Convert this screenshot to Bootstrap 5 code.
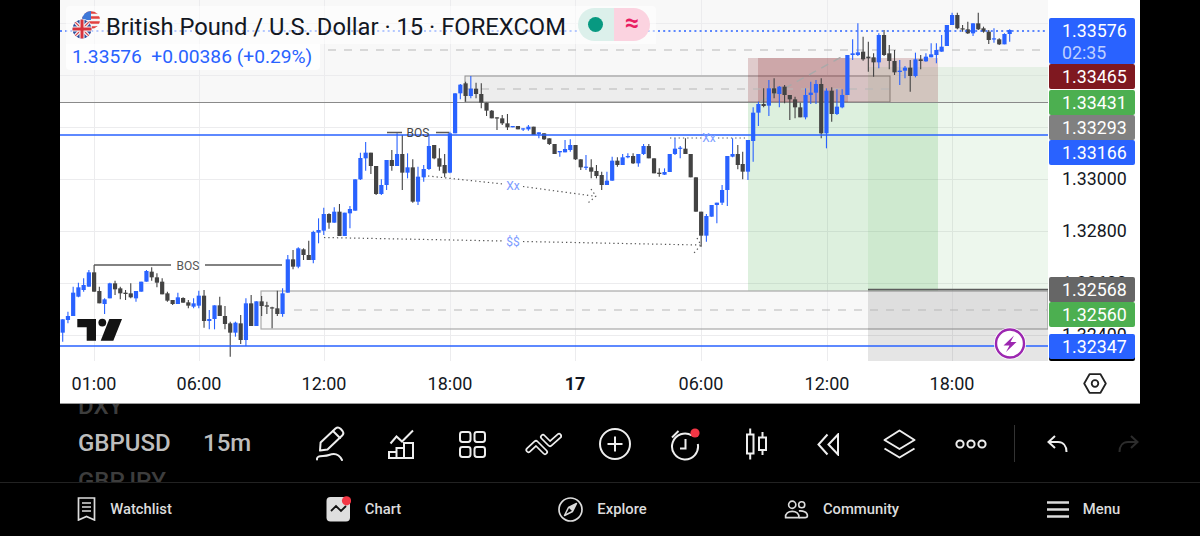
<!DOCTYPE html>
<html lang="en">

<head>
  <meta charset="UTF-8" />
  <title>GBPUSD chart</title>
  <link href="https://cdn.jsdelivr.net/npm/bootstrap@5.3.2/dist/css/bootstrap.min.css" rel="stylesheet">
  <style>
    html,
    body {
      height: 536px;
      overflow: hidden;
      background: #000;
      font-family: Roboto, "Liberation Sans", sans-serif;
    }

    .chart-panel {
      margin: 0 60px;
      height: 404px;
      background: #fff;
      border-bottom: 1px solid #9a9a9a;
    }

    .plot-area {
      width: 988px;
      height: 361px;
    }

    .plot-area svg {
      display: block;
    }

    .plot-text {
      font-family: Roboto, "Liberation Sans", sans-serif;
      font-size: 12px;
    }

    .legend-box {
      left: 6px;
      top: 6px;
    }

    .legend-row {
      width: fit-content;
      padding: 4px 0 0 6px;
      background: rgba(255, 255, 255, .55);
      border-radius: 4px 4px 0 0;
    }

    .legend-title {
      font-size: 23.75px;
      line-height: 32px;
      color: #131722;
      white-space: nowrap;
    }

    .legend-price {
      width: fit-content;
      padding: 0 8px 0 6px;
      font-size: 19.2px;
      line-height: 26px;
      color: #2962ff;
      white-space: nowrap;
      background: rgba(255, 255, 255, .8);
      border-radius: 0 0 4px 4px;
    }

    .status-pill {
      width: 72px;
      height: 33px;
      margin: -5px 6px 0 12px;
      border-radius: 17px;
      overflow: hidden;
    }

    .pill-left {
      background: #dcf0eb;
    }

    .pill-right {
      background: #fbd3e0;
      color: #e91e63;
      font-size: 25px;
      font-weight: 700;
      line-height: 30px;
    }

    .pill-dot {
      width: 15px;
      height: 15px;
      border-radius: 50%;
      background: #089981;
    }

    .axis-col {
      width: 92px;
      height: 361px;
    }

    .axis-tag,
    .axis-plain {
      left: 1px;
      width: 86px;
      height: 25px;
      padding-left: 13px;
      font-size: 17.8px;
      line-height: 26px;
      white-space: nowrap;
    }

    .axis-tag {
      border-radius: 2px;
      color: #fff;
    }

    .axis-plain {
      color: #131722;
    }

    .tag-blue {
      background: #2962ff;
    }

    .tag-red {
      background: #7f1820;
    }

    .tag-green {
      background: #4caf50;
    }

    .tag-gray {
      background: #808080;
    }

    .tag-dark {
      background: #666;
    }

    .tag-black {
      background: #000;
    }

    .tag-timer {
      height: 46px;
    }

    .tag-timer span {
      display: block;
      line-height: 22px;
      padding-top: 2px;
    }

    .tag-timer span+span {
      color: #bfd0ff;
      padding-top: 0;
    }

    .time-row {
      height: 42px;
    }

    .time-label {
      top: 10px;
      transform: translateX(-50%);
      font-size: 18px;
      line-height: 25px;
      color: #131722;
    }

    .gear-cell {
      left: 1023px;
      top: 12px;
    }

    .tool-row {
      height: 79px;
      padding-left: 78px;
      border-bottom: 1px solid #222;
    }

    .picker-col {
      height: 78px;
      padding-top: 2px;
      overflow: hidden;
      font-size: 24px;
      font-weight: 500;
      line-height: 37.5px;
    }

    .picker-sym {
      width: 125px;
    }

    .picker-int {
      width: 91.5px;
    }

    .picker-off {
      color: #3d3d3d;
      white-space: nowrap;
    }

    .picker-on {
      color: #bdbdbd;
    }

    .tool-cell {
      width: 71.2px;
      height: 40px;
      margin-top: 2px;
    }

    .tool-divider {
      width: 1px;
      height: 37px;
      margin: 0 7px 0 7.5px;
      background: #333;
    }

    .bottom-bar {
      height: 52px;
      padding-left: 5px;
    }

    .menu-icon {
      margin-left: 6px;
    }

    .bottom-label {
      margin-left: 14px;
      padding-top: 1px;
      font-size: 14.8px;
      font-weight: 500;
      color: #dcdcdc;
    }
  </style>
</head>

<body>
  <div class="chart-panel">
    <div class="d-flex">
      <div class="plot-area position-relative">
        <svg id="plot" width="988" height="361" viewBox="60 0 988 361" xmlns="http://www.w3.org/2000/svg">
          <!-- bandas y zonas -->
          <rect x="60" y="0" width="988" height="102" fill="#f8f8f8" />
          <rect x="261" y="291" width="787" height="38" fill="#f8f8f8" />
          <g stroke="#ececee" stroke-width="1">
            <path d="M94.5 0V361M199.5 0V361M324.5 0V361M450.5 0V361M575.5 0V361M701.5 0V361M827.5 0V361M952.5 0V361" />
            <path d="M60 23.5H1048M60 75.5H1048M60 127.5H1048M60 179.5H1048M60 231.5H1048M60 283.5H1048M60 335.5H1048" />
          </g>
          <rect x="465" y="76" width="425" height="26" fill="#ededed" stroke="#8d8d8d" />
          <rect x="868" y="67" width="180" height="224" fill="#4caf50" fill-opacity=".1" />
          <rect x="748" y="103" width="190" height="188" fill="#4caf50" fill-opacity=".19" />
          <rect x="748" y="58" width="190" height="45" fill="#801820" fill-opacity=".2" />
          <rect x="758" y="58" width="90" height="45" fill="#801820" fill-opacity=".2" />
          <rect x="261" y="291" width="787" height="38" fill="none" stroke="#a9a9a9" stroke-width="1.2" />
          <rect x="868" y="289" width="180" height="72" fill="#000" fill-opacity=".1" />
          <path d="M868 289.5H1048" stroke="#5c5c5c" stroke-width="1.5" />

          <path d="M60 102.5H1048" stroke="#8a8a8a" stroke-width="1.2" />
          <path d="M328 50H1048" stroke="#b8b8b8" stroke-width="1.2" stroke-dasharray="8 8" />
          <path d="M465 89H890" stroke="#b8b8b8" stroke-width="1.2" stroke-dasharray="8 8" />
          <path d="M294 310H1048" stroke="#b8b8b8" stroke-width="1.2" stroke-dasharray="8 8" />
          <path d="M760 102L843 56" stroke="#a9a9a9" stroke-width="1.4" stroke-dasharray="8 6" />

          <g id="candles"></g>

          <!-- lineas de precio -->
          <path d="M60 31H1048" stroke="#2962ff" stroke-width="1.4" stroke-dasharray="2 3.2" />
          <path d="M60 135H1048" stroke="#2962ff" stroke-width="1.5" />
          <path d="M60 346H1048" stroke="#2962ff" stroke-width="1.5" />

          <!-- anotaciones -->
          <g stroke="#5a5a5a" stroke-width="1.3" fill="none">
            <path d="M94 265H171M205 265H282" />
            <path d="M387 132.5H402M436 132.5H449" />
          </g>
          <text class="plot-text" x="188" y="269.5" text-anchor="middle" fill="#555">BOS</text>
          <text class="plot-text" x="418" y="137" text-anchor="middle" fill="#444">BOS</text>
          <g stroke="#555" stroke-width="1.2" stroke-dasharray="1.3 3" fill="none">
            <path d="M428 176L503 184M523 186.5L593 196" />
            <path d="M591 189L596 196L588 203" />
            <path d="M324 237.5L503 241M523 241.5L700 245" />
            <path d="M697 238L701 245L694 253" />
            <path d="M670 138H702M718 138H745" />
          </g>
          <text class="plot-text" x="513" y="190" text-anchor="middle" fill="#7c9cff">Xx</text>
          <text class="plot-text" x="513" y="246" text-anchor="middle" fill="#7c9cff">$$</text>
          <text class="plot-text" x="709" y="142" text-anchor="middle" fill="#7c9cff">Xx</text>

          <!-- logo -->
          <g fill="#131313">
            <path d="M77.3 319H96V340.7H86.7V327.3H77.3Z" />
            <circle cx="102.3" cy="322.6" r="3.9" />
            <path d="M109.3 319H122L113.3 340.7H100.7Z" />
          </g>

          <!-- rayo -->
          <circle cx="1010" cy="343.5" r="16" fill="#fff" />
          <circle cx="1010" cy="343.5" r="14" fill="#fff" stroke="#9c27b0" stroke-width="2.4" />
          <path d="M1014 335.5L1003.5 345.5H1009.5L1006 352L1016.5 342H1010.5Z" fill="#9c27b0" />
        </svg>

        <div class="legend-box position-absolute">
          <div class="legend-row d-flex align-items-center">
            <svg width="34" height="34" viewBox="0 0 34 34" xmlns="http://www.w3.org/2000/svg" class="flex-shrink-0">
              <defs>
                <clipPath id="usClip">
                  <circle cx="19" cy="10" r="9" />
                </clipPath>
                <clipPath id="ukClip">
                  <circle cx="10" cy="19" r="9.5" />
                </clipPath>
              </defs>
              <g clip-path="url(#usClip)">
                <rect x="9" y="0" width="20" height="20" fill="#f4f4f4" />
                <path d="M9 2.5H29M9 7.5H29M9 12.5H29M9 17.5H29" stroke="#e2413f" stroke-width="2.6" />
                <rect x="9" y="0" width="10" height="10" fill="#3f78d8" />
              </g>
              <circle cx="10" cy="19" r="10.3" fill="#fff" fill-opacity=".9" />
              <g clip-path="url(#ukClip)">
                <rect x="0" y="9" width="20" height="20" fill="#2b4a9b" />
                <path d="M0 9L20 29M20 9L0 29" stroke="#f4f4f4" stroke-width="3.6" />
                <path d="M0 9L20 29M20 9L0 29" stroke="#d8424b" stroke-width="1.2" />
                <path d="M10 9V29M0 19H20" stroke="#f4f4f4" stroke-width="5" />
                <path d="M10 9V29M0 19H20" stroke="#d8323c" stroke-width="3" />
              </g>
            </svg>
            <div class="legend-title">British Pound / U.S. Dollar · 15 · FOREXCOM</div>
            <div class="status-pill d-flex">
              <div class="pill-left w-50 d-flex align-items-center justify-content-center">
                <span class="pill-dot"></span>
              </div>
              <div class="pill-right w-50 text-center">≈</div>
            </div>
          </div>
          <div class="legend-price">1.33576&nbsp; +0.00386 (+0.29%)</div>
        </div>
      </div>

      <div class="axis-col position-relative">
        <div class="axis-tag tag-blue tag-timer position-absolute" style="top:18px"><span>1.33576</span><span>02:35</span></div>
        <div class="axis-tag tag-red position-absolute" style="top:64px">1.33465</div>
        <div class="axis-tag tag-green position-absolute" style="top:90px">1.33431</div>
        <div class="axis-tag tag-gray position-absolute" style="top:115px">1.33293</div>
        <div class="axis-tag tag-blue position-absolute" style="top:140px">1.33166</div>
        <div class="axis-plain position-absolute" style="top:166px">1.33000</div>
        <div class="axis-plain position-absolute" style="top:218px">1.32800</div>
        <div class="axis-plain position-absolute" style="top:270px">1.32600</div>
        <div class="axis-plain position-absolute" style="top:322px">1.32400</div>
        <div class="axis-tag tag-dark position-absolute" style="top:277px">1.32568</div>
        <div class="axis-tag tag-green position-absolute" style="top:302px">1.32560</div>
        <div class="axis-tag tag-black position-absolute" style="top:336px"></div>
        <div class="axis-tag tag-blue position-absolute" style="top:334px">1.32347</div>
      </div>
    </div>

    <div class="time-row position-relative">
      <span class="time-label position-absolute" style="left:34px">01:00</span>
      <span class="time-label position-absolute" style="left:139px">06:00</span>
      <span class="time-label position-absolute" style="left:264px">12:00</span>
      <span class="time-label position-absolute" style="left:390px">18:00</span>
      <span class="time-label fw-bold position-absolute" style="left:515px">17</span>
      <span class="time-label position-absolute" style="left:641px">06:00</span>
      <span class="time-label position-absolute" style="left:767px">12:00</span>
      <span class="time-label position-absolute" style="left:892px">18:00</span>
      <svg class="gear-cell position-absolute" width="24" height="21" viewBox="0 0 24 21" fill="none" stroke="#222" stroke-width="1.8" xmlns="http://www.w3.org/2000/svg">
        <path d="M1.2 10.5L6.5 1.2H17.5L22.8 10.5L17.5 19.8H6.5Z" stroke-linejoin="round" />
        <circle cx="12" cy="10.5" r="3.3" />
      </svg>
    </div>
  </div>

  <div class="tool-row d-flex align-items-center">
    <div class="picker-col picker-sym d-flex flex-column justify-content-center">
      <div class="picker-off">DXY</div>
      <div class="picker-on">GBPUSD</div>
      <div class="picker-off">GBPJPY</div>
    </div>
    <div class="picker-col picker-int d-flex align-items-center picker-on">15m</div>

    <div class="tool-cell d-flex align-items-center justify-content-center">
      <svg width="29" height="36" viewBox="0 0 29 36" fill="none" stroke="#eee" stroke-width="2" stroke-linecap="round" stroke-linejoin="round" xmlns="http://www.w3.org/2000/svg">
        <path d="M4 24.5L4.6 16.5L19.5 2.5C21 1.2 23 1.2 24.5 2.7L26.5 5C27.6 6.4 27.5 8.2 26.2 9.5L11.5 23.5Z" />
        <path d="M17 5L24 12" />
        <path d="M1 33.5C0.5 28.5 8 31 13 29C18 27 23 28 26 34" />
      </svg>
    </div>
    <div class="tool-cell d-flex align-items-center justify-content-center">
      <svg width="27" height="31" viewBox="0 0 27 31" fill="none" stroke="#eee" stroke-width="2" xmlns="http://www.w3.org/2000/svg">
        <path d="M2.5 14.5L8.5 7.5L14 12.5L25 1.5" />
        <path d="M1 23H8.5V29H1ZM8.5 19H16V29H8.5ZM16 14H25V29H16Z" />
      </svg>
    </div>
    <div class="tool-cell d-flex align-items-center justify-content-center">
      <svg width="27" height="27" viewBox="0 0 27 27" fill="none" stroke="#eee" stroke-width="2" xmlns="http://www.w3.org/2000/svg">
        <rect x="1" y="1" width="10.5" height="10" rx="2.4" />
        <rect x="15.5" y="1" width="10.5" height="10" rx="2.4" />
        <rect x="1" y="16" width="10.5" height="10" rx="2.4" />
        <rect x="15.5" y="16" width="10.5" height="10" rx="2.4" />
      </svg>
    </div>
    <div class="tool-cell d-flex align-items-center justify-content-center">
      <svg width="37" height="24" viewBox="0 0 37 24" fill="none" xmlns="http://www.w3.org/2000/svg">
        <path d="M3.5 18L11 11L20 20M18 5L25 12L34 4" stroke="#eee" stroke-width="6" stroke-linecap="round" stroke-linejoin="round" />
        <path d="M3.5 18L11 11L20 20M18 5L25 12L34 4" stroke="#000" stroke-width="2.6" stroke-linecap="round" stroke-linejoin="round" />
      </svg>
    </div>
    <div class="tool-cell d-flex align-items-center justify-content-center">
      <svg width="32" height="32" viewBox="0 0 32 32" fill="none" stroke="#eee" stroke-width="2" xmlns="http://www.w3.org/2000/svg">
        <circle cx="16" cy="16" r="15" />
        <path d="M16 8.5V23.5M8.5 16H23.5" />
      </svg>
    </div>
    <div class="tool-cell d-flex align-items-center justify-content-center">
      <svg width="32" height="34" viewBox="0 0 32 34" fill="none" stroke="#eee" stroke-width="2" xmlns="http://www.w3.org/2000/svg">
        <path d="M22 8.5A13 13 0 1 0 27.8 17" />
        <path d="M15.5 12V21.5H10" />
        <path d="M2 10.5L8.5 4" />
        <circle cx="25" cy="6" r="4.6" fill="#f23645" stroke="none" />
      </svg>
    </div>
    <div class="tool-cell d-flex align-items-center justify-content-center">
      <svg width="24" height="32" viewBox="0 0 24 32" fill="none" stroke="#eee" stroke-width="2" xmlns="http://www.w3.org/2000/svg">
        <rect x="2" y="6.5" width="6.5" height="19" />
        <path d="M5.2 0.5V6.5M5.2 25.5V31.5" />
        <rect x="14" y="9.5" width="7" height="12.5" />
        <path d="M17.5 4V9.5M17.5 22V27" />
      </svg>
    </div>
    <div class="tool-cell d-flex align-items-center justify-content-center">
      <svg width="23" height="23" viewBox="0 0 23 23" fill="none" stroke="#eee" stroke-width="2" stroke-linejoin="miter" xmlns="http://www.w3.org/2000/svg">
        <path d="M10.5 1.5L1.5 11.5L10.5 21.5" />
        <path d="M21 1.5L11.5 11.5L21 21.5Z" />
      </svg>
    </div>
    <div class="tool-cell d-flex align-items-center justify-content-center">
      <svg width="33" height="30" viewBox="0 0 33 30" fill="none" stroke="#eee" stroke-width="2" stroke-linejoin="round" xmlns="http://www.w3.org/2000/svg">
        <path d="M16.5 1.5L31.5 11L16.5 20L1.5 11Z" />
        <path d="M1.5 19.5L16.5 28.5L31.5 19.5" />
      </svg>
    </div>
    <div class="tool-cell d-flex align-items-center justify-content-center">
      <svg width="32" height="10" viewBox="0 0 32 10" fill="none" stroke="#eee" stroke-width="2" xmlns="http://www.w3.org/2000/svg">
        <circle cx="5" cy="5" r="3.6" />
        <circle cx="16" cy="5" r="3.6" />
        <circle cx="27" cy="5" r="3.6" />
      </svg>
    </div>
    <div class="tool-divider"></div>
    <div class="tool-cell d-flex align-items-center justify-content-center">
      <svg width="21" height="18" viewBox="0 0 21 18" fill="none" stroke="#eee" stroke-width="2" xmlns="http://www.w3.org/2000/svg">
        <path d="M8 1L1.5 7L8 13" />
        <path d="M1.5 7H11C16 7 19.5 10.5 19.5 17" />
      </svg>
    </div>
    <div class="tool-cell d-flex align-items-center justify-content-center">
      <svg width="21" height="18" viewBox="0 0 21 18" fill="none" stroke="#2c2c2c" stroke-width="2" xmlns="http://www.w3.org/2000/svg">
        <path d="M13 1L19.5 7L13 13" />
        <path d="M19.5 7H10C5 7 1.5 10.5 1.5 17" />
      </svg>
    </div>
  </div>

  <div class="bottom-bar row g-0">
    <div class="col d-flex align-items-center justify-content-center">
      <svg width="19" height="24" viewBox="0 0 19 24" fill="none" stroke="#dcdcdc" stroke-width="1.7" xmlns="http://www.w3.org/2000/svg">
        <path d="M1.5 1H17.5V23L9.5 19.5L1.5 23Z" />
        <path d="M5 6H14M5 10H14M5 14H14" />
      </svg>
      <span class="bottom-label">Watchlist</span>
    </div>
    <div class="col d-flex align-items-center justify-content-center">
      <svg width="25" height="26" viewBox="0 0 25 26" xmlns="http://www.w3.org/2000/svg">
        <rect x="0.5" y="1" width="23.5" height="24.5" rx="4" fill="#dedede" />
        <path d="M5 15L10 10L15 15L20 10" fill="none" stroke="#111" stroke-width="1.8" />
        <circle cx="20.5" cy="4.8" r="4.6" fill="#f23645" />
      </svg>
      <span class="bottom-label">Chart</span>
    </div>
    <div class="col d-flex align-items-center justify-content-center">
      <svg width="25" height="25" viewBox="0 0 25 25" fill="none" xmlns="http://www.w3.org/2000/svg">
        <circle cx="12.5" cy="12.5" r="11.5" stroke="#dcdcdc" stroke-width="1.7" />
        <path d="M18.5 6.5L14.5 14.5L6.5 18.5L10.5 10.5Z" stroke="#dcdcdc" stroke-width="1.5" stroke-linejoin="round" />
        <path d="M18.5 6.5L14.5 14.5L10.5 10.5Z" fill="#dcdcdc" />
      </svg>
      <span class="bottom-label">Explore</span>
    </div>
    <div class="col d-flex align-items-center justify-content-center">
      <svg width="25" height="19" viewBox="0 0 25 20" fill="none" stroke="#dcdcdc" stroke-width="1.7" xmlns="http://www.w3.org/2000/svg">
        <circle cx="8" cy="5" r="3.8" />
        <circle cx="18" cy="5" r="3.2" />
        <path d="M1 18.5C0.5 14 4 12 8 12C12 12 15.5 14 15 18.5Z" />
        <path d="M15 11.5C19 11 24 12.5 24 16.5C24 18 23 18.5 21.5 18.5H15" />
      </svg>
      <span class="bottom-label">Community</span>
    </div>
    <div class="col d-flex align-items-center justify-content-center">
      <svg class="menu-icon" width="22" height="17" viewBox="0 0 22 17" fill="none" stroke="#dcdcdc" stroke-width="2.4" xmlns="http://www.w3.org/2000/svg">
        <path d="M0 1.5H22M0 8.5H22M0 15.5H22" />
      </svg>
      <span class="bottom-label">Menu</span>
    </div>
  </div>

  <script src="https://cdn.jsdelivr.net/npm/bootstrap@5.3.2/dist/js/bootstrap.bundle.min.js"></script>
  <script>
    // velas leidas de la captura: [azul?, cuerpo arriba, cuerpo abajo, mecha arriba, mecha abajo] en px x3
    const tramos = [
      { x0: 62.7, y0: 240, velas: [
        [1,238,278,238,305],[1,228,240,215,250],[1,158,228,140,228],[1,142,170,128,172],[1,135,150,115,155],[1,97,140,90,140],
        [0,97,155,75,155],[0,153,190,140,190],[1,178,192,175,222],[1,130,175,128,175],[0,130,148,122,165],[0,145,160,140,178],
        [0,158,162,150,180],[0,160,172,130,175],[1,153,175,153,185],[1,125,155,125,155],[1,93,125,90,125],[0,95,112,82,122],
        [0,112,128,100,142],[0,125,163,115,163],[0,160,182,155,185],[0,180,192,180,195],[1,172,192,158,192],[0,174,188,172,188],
        [0,187,197,180,205],[1,190,200,175,205],[1,167,197,152,205],[0,167,243,150,263],[1,237,243,210,268],[1,196,237,196,268],
        [0,196,228,170,228],[0,228,252,198,268],[0,250,278,245,350],[1,248,278,245,290],[0,250,300,225,312],[1,190,300,175,318],
        [0,190,258,165,258],[1,184,258,184,258],[0,184,198,168,228],[0,196,200,185,222],[0,202,205,200,265],[0,205,222,152,228],
        [1,160,222,145,230],[1,58,158,45,158],[0,58,80,30,88],[1,25,80,22,85],[0,28,45,25,60],[0,45,60,2,60]
      ] },
      { x0: 313.3, y0: 130, velas: [
        [1,306,390,302,400],[1,300,308,265,340],[1,252,302,233,315],[0,252,278,250,296],[1,245,278,232,278],[0,245,318,222,318],
        [1,248,318,248,318],[1,237,250,228,295],[1,148,242,148,242],[1,84,148,68,150],[1,68,85,36,122],[0,68,108,68,132],
        [0,108,192,108,195],[1,165,192,148,195],[1,90,165,90,180],[0,90,108,60,122],[1,72,108,10,108],[0,72,128,15,180],
        [1,112,128,70,145],[0,112,215,88,218],[1,140,215,110,225]
      ] },
      { x0: 423.7, y0: 70, velas: [
        [1,297,322,285,335],[1,228,297,195,300],[0,225,265,225,268],[0,265,290,235,302],[0,285,310,252,322],[1,190,308,185,310],
        [1,70,190,70,190],[1,44,70,42,88],[0,40,78,35,95],[1,56,78,18,85],[0,56,72,38,85],[0,72,98,40,115],[0,98,122,98,138],
        [0,122,145,120,145],[0,142,145,142,180],[0,145,160,135,165],[0,160,172,132,180],[1,168,172,168,172],[0,168,178,168,178],
        [1,175,178,175,183],[1,170,178,165,182],[0,170,195,170,195],[1,187,192,187,205],[0,190,208,190,210],[0,205,222,205,225],
        [0,222,252,222,252],[1,243,247,243,260],[1,237,247,210,247],[1,225,240,208,245],[0,225,268,225,270],[0,268,292,268,300],
        [1,290,293,255,300],[0,292,305,268,325],[0,303,318,285,325],[0,315,345,305,360],[1,332,345,305,345],[1,272,332,260,332],
        [0,272,285,262,290],[1,262,285,252,285],[1,258,262,250,265],[0,258,280,250,282],[1,252,280,252,290],[1,228,252,222,255],
        [0,228,265,222,265],[0,265,310,265,310],[0,308,312,295,320],[1,306,314,295,315],[1,252,306,252,306],[1,236,252,205,255],
        [1,233,236,228,265],[0,236,252,205,252],[0,252,322,252,322],[0,322,425,322,425],[0,425,497,425,530],[1,438,497,432,515],
        [1,405,440,405,440],[1,398,405,398,460],[1,360,398,345,405],[1,258,360,258,408],[1,252,260,205,262],[0,252,285,225,298]
      ] },
      { x0: 742.7, y0: 0, velas: [
        [0,492,515,455,538],[1,420,515,420,540],[1,338,423,322,485],[1,312,338,305,378],[0,312,318,265,322],[1,265,317,240,348],
        [0,265,280,235,295],[1,260,282,258,322],[0,260,285,255,310],[0,285,298,285,360],[0,298,322,290,355],[0,322,352,308,352],
        [1,285,352,265,358],[1,278,285,245,312],[1,252,278,240,312],[0,252,400,235,415],[1,272,400,265,445],[0,272,342,262,365],
        [1,320,342,268,345],[1,285,322,268,325],[1,165,285,165,285],[1,160,165,118,180],[1,157,165,70,168],[0,155,178,110,182],
        [0,170,175,125,215],[0,172,187,160,230],[1,105,187,100,205],[0,105,165,90,168],[0,160,183,135,208],[0,183,217,150,225],
        [1,212,216,180,255],[1,203,212,198,235],[0,203,228,180,275],[1,178,228,158,232],[0,178,183,165,208],[1,170,184,160,185],
        [1,163,172,130,172],[1,150,165,130,190],[1,140,155,105,155],[1,75,138,75,138],[1,45,75,38,75],[0,45,85,38,88],
        [0,85,88,75,95],[0,88,100,65,102],[1,70,100,70,108],[0,70,88,38,90],[0,85,95,80,98],[0,95,120,90,132],
        [1,115,118,85,128],[0,118,133,115,135],[1,102,133,100,133],[1,90,102,88,125]
      ] }
    ];

    const NS = "http://www.w3.org/2000/svg";
    const capa = document.getElementById("candles");
    const PASO = 5.235;

    tramos.forEach((t) => {
      t.velas.forEach((v, i) => {
        const color = v[0] ? "#2962ff" : "#434343";
        const x = t.x0 + i * PASO;
        const arriba = t.y0 + v[1] / 3;
        const alto = Math.max((v[2] - v[1]) / 3, 1.2);

        const mecha = document.createElementNS(NS, "line");
        mecha.setAttribute("x1", x);
        mecha.setAttribute("x2", x);
        mecha.setAttribute("y1", t.y0 + v[3] / 3);
        mecha.setAttribute("y2", t.y0 + v[4] / 3);
        mecha.setAttribute("stroke", color);
        mecha.setAttribute("stroke-width", "1.1");
        capa.appendChild(mecha);

        const cuerpo = document.createElementNS(NS, "rect");
        cuerpo.setAttribute("x", x - 2.1);
        cuerpo.setAttribute("y", arriba);
        cuerpo.setAttribute("width", "4.2");
        cuerpo.setAttribute("height", alto);
        cuerpo.setAttribute("fill", color);
        capa.appendChild(cuerpo);
      });
    });
  </script>

</body>

</html>
